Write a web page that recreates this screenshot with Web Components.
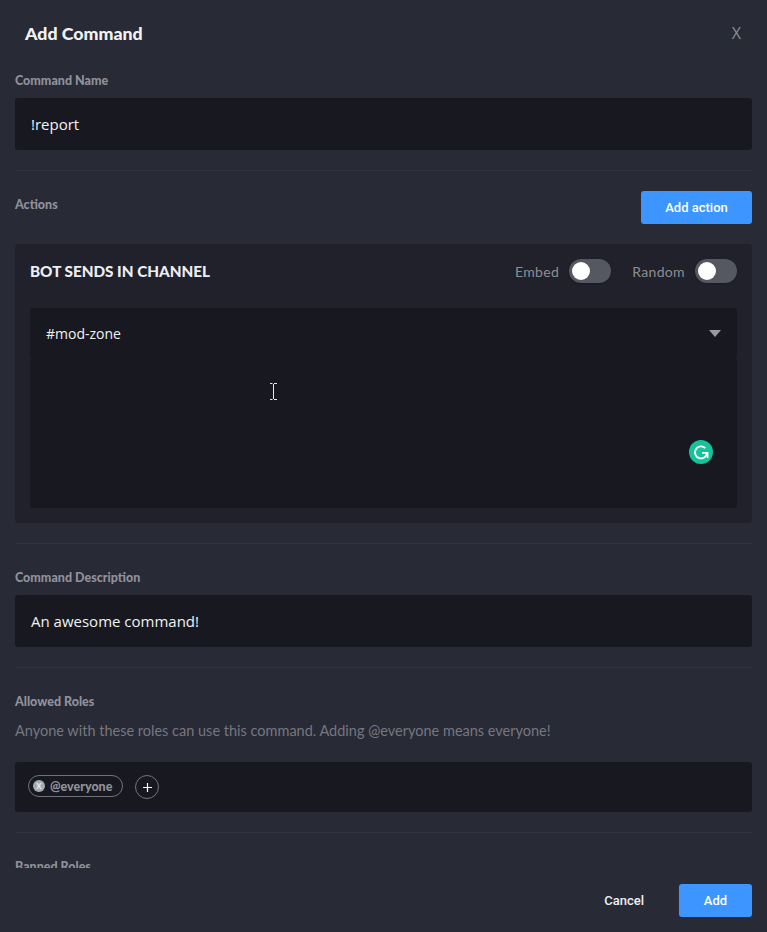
<!DOCTYPE html>
<html><head><meta charset="utf-8"><style>
html,body{margin:0;padding:0;height:100%;background:#282a35}
body{overflow:hidden}
</style></head><body>
<template id="t-field"><style>
:host{display:block}
.l{font:900 12.5px/18px Lato,sans-serif;color:#90919a;height:16px}
.b{margin-top:10px;height:52px;box-sizing:border-box;background:#181920;border-radius:3px;padding:0 16px;display:flex;align-items:center;font:400 15px "Open Sans",sans-serif;color:#f0f1f3}
</style><div class="l"><slot name="label"></slot></div><div class="b"><slot></slot></div></template>
<template id="t-toggle"><style>
:host{display:flex;align-items:center;gap:10px;font:400 14px Lato,sans-serif;color:#8d8e95;letter-spacing:.35px}
.s{width:42px;height:24px;border-radius:12px;background:#555761;position:relative;box-shadow:0 1px 2px rgba(0,0,0,.25)}
.s::after{content:"";position:absolute;left:3px;top:3px;width:18px;height:18px;border-radius:50%;background:#fff}
</style><slot></slot><div class="s"></div></template>
<template id="t-btn"><style>
:host{display:inline-flex;align-items:center;justify-content:center;height:33px;background:#3d96ff;border-radius:3px;color:#fff;font:500 13px Roboto,sans-serif}
</style><slot></slot></template>
<template id="t-divider"><style>:host{display:block;height:1px;background:#31333e}</style></template>
<template id="t-card"><style>
:host{display:block;background:#20212a;border-radius:4px;padding:0 15px 15px}
.h{height:54px;padding-bottom:10px;display:flex;align-items:center;justify-content:space-between}
.t{font:900 15.25px Lato,sans-serif;color:#eceef2}
.r{display:flex;gap:21px}
.sel{height:50px;background:#181920;border-radius:3px;box-sizing:border-box;padding:16px;position:relative;font:400 14px/20px "Open Sans",sans-serif;color:#f0f1f3}
.area{height:150px;background:#181920;border-radius:3px;position:relative}
.a{position:absolute;right:16px;top:22px;width:0;height:0;border-left:6px solid transparent;border-right:6px solid transparent;border-top:7px solid #9a9ba0}
.cur{position:absolute;left:239px;top:25px}
.g{position:absolute;left:659px;top:82px}
</style><div class="h"><div class="t"><slot name="title"></slot></div><div class="r"><slot name="controls"></slot></div></div>
<div class="sel"><slot></slot><div class="a"></div></div>
<div class="area">
<svg class="cur" width="9" height="17" viewBox="0 0 9 17" fill="none" stroke="#e8e8e8" stroke-width="1"><path d="M1 .5h2.5M5 .5h3M4.5 1v15M1 16.5h2.5M5 16.5h3"/></svg>
<svg class="g" width="24" height="24" viewBox="0 0 24 24"><circle cx="12" cy="12" r="12" fill="#15c39a"/><path d="M16.3 8.2A6 6 0 1 0 18 12.5" fill="none" stroke="#fff" stroke-width="1.9"/><path d="M13.2 12.8h5.4v5.2" fill="none" stroke="#fff" stroke-width="1.7"/></svg>
</div></template>
<template id="t-chip"><style>
:host{display:inline-flex;align-items:center;box-sizing:border-box;height:22px;width:95px;margin-bottom:2px;border:1px solid #70727a;border-radius:11px;padding-left:4px;gap:5px;font:900 12.5px Lato,sans-serif;color:#90919a}
.x{width:12px;height:12px;border-radius:50%;background:#a3acb6;color:#e8ebee;font:700 8px/12px "Open Sans",sans-serif;text-align:center}
</style><span class="x">X</span><slot></slot></template>
<template id="t-plus"><style>
:host{display:inline-flex;align-items:center;justify-content:center;width:24px;height:24px;box-sizing:border-box;border:1px solid #74757c;border-radius:50%}
</style><svg width="9" height="9" viewBox="0 0 9 9" stroke="#fff" stroke-width="1.2"><path d="M4.5 0v9M0 4.5h9"/></svg></template>
<template id="t-modal"><style>
:host{display:flex;flex-direction:column;width:767px;height:932px;background:#282a35;overflow:hidden}
header{height:68px;flex:none;display:flex;align-items:center;justify-content:space-between;padding:0 26px 2px 25px;box-sizing:border-box}
h1{margin:0;font:900 17.75px Lato,sans-serif;color:#f1f2f4}
.x{font:400 16px "Open Sans",sans-serif;color:#8b8c93}
main{height:800px;flex:none;overflow:hidden;padding:4px 15px 0;box-sizing:border-box}
footer{flex:none;height:64px;display:flex;align-items:flex-start;justify-content:flex-end;gap:35px;padding:16px 15px 0;box-sizing:border-box}
.cancel{height:33px;display:flex;align-items:center;font:500 13px Roboto,sans-serif;color:#eef0f2}
</style><header><h1><slot name="title"></slot></h1><span class="x">X</span></header><main><slot></slot></main>
<footer><span class="cancel"><slot name="cancel"></slot></span><slot name="ok"></slot></footer></template>
<template id="t-actions"><style>
:host{display:flex;justify-content:space-between;align-items:flex-start;height:33px}
.l{font:900 12.5px/18px Lato,sans-serif;color:#90919a;margin-top:5px}
</style><div class="l"><slot name="label"></slot></div><slot></slot></template>
<template id="t-roles"><style>
:host{display:block}
.l{font:900 12.5px/18px Lato,sans-serif;color:#90919a;height:16px}
.d{font:400 14.5px/20px Lato,sans-serif;color:#767780;margin-top:12px}
.b{margin-top:21px;height:50px;box-sizing:border-box;background:#181920;border-radius:3px;padding:0 13px;display:flex;align-items:center;gap:12px}
</style><div class="l"><slot name="label"></slot></div><div class="d"><slot name="desc"></slot></div><div class="b"><slot></slot></div></template>
<template id="t-clip"><style>:host{display:block;font:900 12.5px/18px Lato,sans-serif;color:#90919a;height:18px}</style><slot></slot></template>

<cmd-modal>
  <span slot="title">Add Command</span>
  <cmd-field><span slot="label">Command Name</span>!report</cmd-field>
  <cmd-divider style="margin:20px 0 20px"></cmd-divider>
  <cmd-actions><span slot="label">Actions</span><cmd-btn style="width:111px">Add action</cmd-btn></cmd-actions>
  <cmd-card style="margin-top:20px">
    <span slot="title">BOT SENDS IN CHANNEL</span>
    <cmd-toggle slot="controls">Embed</cmd-toggle>
    <cmd-toggle slot="controls">Random</cmd-toggle>
    #mod-zone
  </cmd-card>
  <cmd-divider style="margin:20px 0 25px"></cmd-divider>
  <cmd-field><span slot="label">Command Description</span>An awesome command!</cmd-field>
  <cmd-divider style="margin:20px 0 25px"></cmd-divider>
  <cmd-roles><span slot="label">Allowed Roles</span><span slot="desc">Anyone with these roles can use this command. Adding @everyone means everyone!</span><cmd-chip>@everyone</cmd-chip><cmd-plus></cmd-plus></cmd-roles>
  <cmd-divider style="margin:20px 0 25px"></cmd-divider>
  <cmd-clip>Banned Roles</cmd-clip>
  <span slot="cancel">Cancel</span>
  <cmd-btn slot="ok" style="width:73px">Add</cmd-btn>
</cmd-modal>
<script>
for (const n of ['field','toggle','btn','divider','card','chip','plus','modal','actions','roles','clip']) {
  customElements.define('cmd-'+n, class extends HTMLElement {
    constructor(){ super(); this.attachShadow({mode:'open'}).appendChild(document.getElementById('t-'+n).content.cloneNode(true)); }
  });
}
</script>
</body></html>
